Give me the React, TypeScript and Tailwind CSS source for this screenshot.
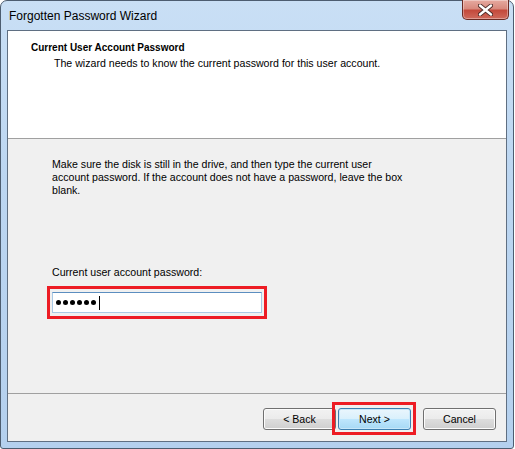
import { useState } from "react";

function WinButton({ label, primary = false }: { label: string; primary?: boolean }) {
  return (
    <button
      className={
        primary
          ? "w-[73px] h-[22px] rounded-[3px] border border-[#3c7fb1] bg-[linear-gradient(#eaf6fd_0%,#d9f0fc_50%,#bee6fd_51%,#a7d9f5_100%)] text-[10.6px] leading-[13px] text-black shadow-[inset_0_0_0_1px_#c8e8fa]"
          : "w-[73px] h-[22px] rounded-[3px] border border-[#707070] bg-[linear-gradient(#f2f2f2_0%,#ebebeb_50%,#dddddd_51%,#cfcfcf_100%)] text-[10.6px] leading-[13px] text-black shadow-[inset_0_0_0_1px_#fcfcfc]"
      }
    >
      {label}
    </button>
  );
}

export default function App() {
  const [dots] = useState(6);

  return (
    <div className="w-[515px] h-[449px] bg-white font-['Liberation_Sans',Arial,sans-serif] text-black">
      <div className="w-[514px] h-[449px] rounded-t-[7px] rounded-b-[3px] border border-[#4d5d70] bg-[linear-gradient(180deg,#c9dff5_0%,#bcd6f1_40%,#b4d0ee_100%)] flex flex-col">
        {/* title bar */}
        <div className="h-[29px] flex items-start">
          <span className="pl-[8px] pt-[7px] text-[12px] leading-[16px] text-black">Forgotten Password Wizard</span>
          <div className="ml-auto mr-[4px] -mt-[1px] w-[47px] h-[20px] rounded-b-[5px] border border-[#6b2b24] border-t-0 bg-[linear-gradient(180deg,#e6aaa0_0%,#d88a7e_45%,#c44a3c_55%,#cf6a5c_100%)] flex items-center justify-center shadow-[inset_0_0_0_1px_rgba(255,255,255,0.35)]">
            <svg width="15" height="12" viewBox="0 0 15 12">
              <path d="M2 1.5 L13 10.5 M13 1.5 L2 10.5" stroke="#4a2a26" strokeWidth="4.2" strokeLinecap="round" />
              <path d="M2 1.5 L13 10.5 M13 1.5 L2 10.5" stroke="#ffffff" strokeWidth="2.4" strokeLinecap="round" />
            </svg>
          </div>
        </div>

        {/* client area */}
        <div className="mx-[6px] h-[412px] border border-[#5f6f82] bg-[#f0f0f0] flex flex-col">
          <div className="h-[107px] bg-white pl-[23px] pt-[10px]">
            <div className="text-[10px] leading-[13px] font-bold">Current User Account Password</div>
            <div className="pl-[23px] pt-[3px] text-[10.6px] leading-[13px]">
              The wizard needs to know the current password for this user account.
            </div>
          </div>
          <div className="h-px bg-[#a0a0a0]" />

          <div className="h-[254px] pl-[44px] pt-[19px]">
            <p className="text-[10.6px] leading-[13px]">
              Make sure the disk is still in the drive, and then type the current user
              <br />
              account password. If the account does not have a password, leave the box
              <br />
              blank.
            </p>
            <div className="pt-[69px] text-[10.6px] leading-[13px]">Current user account password:</div>
            <div className="-ml-[5px] mt-[7px] w-[220px] h-[33px] border-[3px] border-[#ed1c24] pl-[2px] pt-[3px]">
              <div className="w-[210px] h-[21px] border border-[#a9c9e5] border-t-[#5b8ec0] bg-white flex items-center pl-[3px] gap-[2px]">
                {Array.from({ length: dots }).map((_, i) => (
                  <span key={i} className="w-[5px] h-[5px] rounded-full bg-black" />
                ))}
                <span className="ml-[1px] w-px h-[14px] bg-black" />
              </div>
            </div>
          </div>

          <div className="h-px bg-[#a0a0a0]" />
          <div className="h-[47px] flex items-start justify-end gap-[2px] pr-[10px] pt-[14px]">
            <WinButton label="< Back" />
            <div className="relative flex mr-[10px]">
              <WinButton label="Next >" primary />
              {/* highlight frame drawn over the screenshot */}
              <div className="absolute -left-[6px] -top-[6px] w-[84px] h-[33px] border-[3px] border-[#ed1c24]" />
            </div>
            <WinButton label="Cancel" />
          </div>
        </div>
      </div>
    </div>
  );
}
